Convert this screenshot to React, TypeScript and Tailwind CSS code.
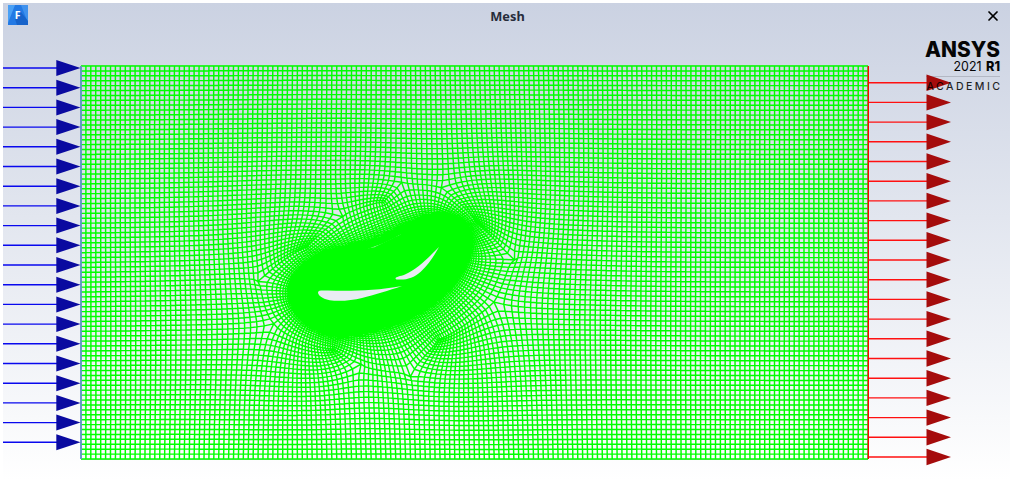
import React, { useMemo } from "react";
import { X } from "lucide-react";

type Pt = [number, number];

const COLS = 160;
const ROWS = 80;
const LEFT = 81;
const RIGHT = 868;
const TOP = 66;
const BOTTOM = 459;
const LAYERS = 18;

// Stepped outline of the O-grid block in grid indices, clockwise.
// Outer corners carry the position they are pinned to.
const OUTLINE: { at: Pt; pin?: Pt }[] = [
  { at: [36, 44], pin: [256, 283] },
  { at: [52, 44] },
  { at: [52, 31], pin: [345, 217] },
  { at: [65, 31] },
  { at: [65, 24], pin: [402, 181] },
  { at: [73, 24], pin: [440, 188] },
  { at: [73, 40] },
  { at: [88, 40], pin: [517, 262] },
  { at: [88, 50], pin: [493, 301] },
  { at: [68, 50] },
  { at: [68, 63], pin: [410, 379] },
  { at: [57, 63], pin: [363, 363] },
  { at: [57, 54] },
  { at: [36, 54], pin: [275, 323] },
];

// Outline of the fully dense core, clockwise
const CORE: Pt[] = [
  [288, 289], [292, 276], [306, 266], [335, 256], [355, 252], [375, 248], [400, 236], [416, 223],
  [431, 216], [448, 214], [461, 221], [469, 238], [466, 257],
  [454, 279], [430, 300], [405, 316], [382, 324],
  [355, 330], [330, 330], [309, 322], [293, 307],
];

const dist = (a: Pt, b: Pt) => Math.hypot(a[0] - b[0], a[1] - b[1]);

// Splits the core outline into many equal steps
function denseLoop(loop: Pt[]): Pt[] {
  const out: Pt[] = [];
  loop.forEach((p, k) => {
    const q = loop[(k + 1) % loop.length];
    const steps = Math.max(1, Math.round(dist(p, q) * 5));
    for (let s = 0; s < steps; s++) {
      out.push([p[0] + ((q[0] - p[0]) * s) / steps, p[1] + ((q[1] - p[1]) * s) / steps]);
    }
  });
  return out;
}

function buildMesh(): string {
  const grid: Pt[][] = [];
  for (let j = 0; j <= ROWS; j++) {
    const row: Pt[] = [];
    for (let i = 0; i <= COLS; i++) {
      row.push([LEFT + ((RIGHT - LEFT) * i) / COLS, TOP + ((BOTTOM - TOP) * j) / ROWS]);
    }
    grid.push(row);
  }

  const inHole = (ci: number, cj: number) => {
    const x = ci + 0.5;
    const y = cj + 0.5;
    let hit = false;
    OUTLINE.forEach(({ at: a }, k) => {
      const b = OUTLINE[(k + 1) % OUTLINE.length].at;
      if (a[0] === b[0] && a[0] > x && a[1] > y !== b[1] > y) hit = !hit;
    });
    return hit;
  };
  const hole: boolean[][] = [];
  for (let j = -1; j <= ROWS; j++) {
    const row: boolean[] = [];
    for (let i = -1; i <= COLS; i++) row.push(inHole(i, j));
    hole.push(row);
  }
  const cell = (i: number, j: number) => hole[j + 1][i + 1];
  const buried = (i: number, j: number) =>
    cell(i, j) && cell(i - 1, j) && cell(i, j - 1) && cell(i - 1, j - 1);
  const hEdge = (i: number, j: number) => !(cell(i, j) && cell(i, j - 1));
  const vEdge = (i: number, j: number) => !(cell(i, j) && cell(i - 1, j));

  const border: { i: number; j: number; hold: number }[] = [];
  const anchors: { k: number; pin: Pt }[] = [];
  OUTLINE.forEach(({ at, pin }, s) => {
    const to = OUTLINE[(s + 1) % OUTLINE.length].at;
    const len = Math.abs(to[0] - at[0]) + Math.abs(to[1] - at[1]);
    const di = Math.sign(to[0] - at[0]);
    const dj = Math.sign(to[1] - at[1]);
    if (pin) anchors.push({ k: border.length, pin });
    for (let t = 0; t < len; t++) {
      const hold = t === 0 ? (pin ? 0.6 : 0.01) : 0.05;
      border.push({ i: at[0] + di * t, j: at[1] + dj * t, hold });
    }
  });
  const n = border.length;

  const loop = denseLoop(CORE);
  const m = loop.length;
  const nearest = anchors.map(({ pin }) => {
    let best = 0;
    loop.forEach((p, q) => {
      if (dist(p, pin) < dist(loop[best], pin)) best = q;
    });
    return best;
  });
  const core: Pt[] = new Array(n);
  const rest: Pt[] = new Array(n);
  anchors.forEach((a, s) => {
    const b = anchors[(s + 1) % anchors.length];
    const steps = (b.k - a.k + n) % n;
    const span = (nearest[(s + 1) % anchors.length] - nearest[s] + m) % m;
    for (let t = 0; t < steps; t++) {
      const k = (a.k + t) % n;
      const u = t / steps;
      core[k] = loop[(nearest[s] + Math.round(span * u)) % m];
      const bow = 0.3 * u * (1 - u);
      const dx = b.pin[0] - a.pin[0];
      const dy = b.pin[1] - a.pin[1];
      rest[k] = [a.pin[0] + dx * u + dy * bow, a.pin[1] + dy * u - dx * bow];
      const p = grid[border[k].j][border[k].i];
      p[0] = rest[k][0];
      p[1] = rest[k][1];
    }
  });
  // Even out the spacing along the core
  for (let pass = 0; pass < 60; pass++) {
    const prev = core.map((p) => [p[0], p[1]] as Pt);
    for (let k = 0; k < n; k++) {
      const a = prev[(k + n - 1) % n];
      const b = prev[(k + 1) % n];
      core[k] = [(a[0] + b[0] + 2 * prev[k][0]) / 4, (a[1] + b[1] + 2 * prev[k][1]) / 4];
    }
  }

  const rings: Pt[][] = [];
  for (let r = 0; r <= LAYERS; r++) {
    rings.push(
      border.map(({ i, j }, k) => {
        const p = grid[j][i];
        if (r === 0) return p;
        return [p[0] + ((core[k][0] - p[0]) * r) / LAYERS, p[1] + ((core[k][1] - p[1]) * r) / LAYERS];
      })
    );
  }

  const onBorder = new Set(border.map(({ i, j }) => j * 1000 + i));
  for (let pass = 0; pass < 240; pass++) {
    for (let j = 1; j < ROWS; j++) {
      for (let i = 1; i < COLS; i++) {
        if (buried(i, j) || onBorder.has(j * 1000 + i)) continue;
        const p = grid[j][i];
        for (let a = 0; a < 2; a++) {
          const mean = (grid[j - 1][i][a] + grid[j + 1][i][a] + grid[j][i - 1][a] + grid[j][i + 1][a]) / 4;
          p[a] += (mean - p[a]) * 1.4;
        }
      }
    }
    for (let k = 0; k < n; k++) {
      const { i, j, hold } = border[k];
      const around: Pt[] = [rings[1][k]];
      if (hEdge(i, j)) around.push(grid[j][i + 1]);
      if (hEdge(i - 1, j)) around.push(grid[j][i - 1]);
      if (vEdge(i, j)) around.push(grid[j + 1][i]);
      if (vEdge(i, j - 1)) around.push(grid[j - 1][i]);
      const p = grid[j][i];
      for (let a = 0; a < 2; a++) {
        const mean = around.reduce((sum, q) => sum + q[a], 0) / around.length;
        p[a] = mean + (rest[k][a] - mean) * hold;
      }
    }
    for (let r = 1; r < LAYERS; r++) {
      for (let k = 0; k < n; k++) {
        const p = rings[r][k];
        const prev = rings[r][(k + n - 1) % n];
        const next = rings[r][(k + 1) % n];
        for (let a = 0; a < 2; a++) {
          p[a] = (rings[r - 1][k][a] * 0.95 + rings[r + 1][k][a] * 1.05 + prev[a] + next[a]) / 4;
        }
      }
    }
  }

  const f = (p: Pt) => p[0].toFixed(1) + " " + p[1].toFixed(1);
  let d = "";
  for (let j = 0; j <= ROWS; j++) {
    let pen = false;
    for (let i = 0; i < COLS; i++) {
      if (!hEdge(i, j)) {
        pen = false;
        continue;
      }
      d += (pen ? "" : "M" + f(grid[j][i])) + "L" + f(grid[j][i + 1]);
      pen = true;
    }
  }
  for (let i = 0; i <= COLS; i++) {
    let pen = false;
    for (let j = 0; j < ROWS; j++) {
      if (!vEdge(i, j)) {
        pen = false;
        continue;
      }
      d += (pen ? "" : "M" + f(grid[j][i])) + "L" + f(grid[j + 1][i]);
      pen = true;
    }
  }
  for (let r = 1; r <= LAYERS; r++) {
    d += "M" + rings[r].map(f).join("L") + "Z";
  }
  for (let k = 0; k < n; k++) {
    d += "M" + rings.map((ring) => f(ring[k])).join("L");
  }
  return d;
}

const corePath = "M" + CORE.map((p) => p.join(" ")).join("L") + "Z";
const arrows = Array.from({ length: 20 }, (_, k) => k * 19.7);

function Viewport() {
  const mesh = useMemo(buildMesh, []);
  return (
    <svg className="block h-[452px] w-[1007px]" viewBox="3 29 1007 452" fontFamily="Inter, 'Liberation Sans', sans-serif">
      <g fill="#050505">
        <text x="925" y="57" fontSize="21.5" fontWeight="800" textLength="75" lengthAdjust="spacingAndGlyphs">ANSYS</text>
        <text x="953.5" y="71" fontSize="13.5" textLength="28" lengthAdjust="spacingAndGlyphs">2021</text>
        <text x="986" y="71" fontSize="13.5" fontWeight="800" textLength="14" lengthAdjust="spacingAndGlyphs">R1</text>
      </g>
      <path d="M926 76.5H1000" stroke="#b3b8c4" />
      <path d="M81 65.5H868M81 459.5H868" stroke="#b9bcc0" />
      <path d={mesh} fill="none" stroke="#00ff00" strokeWidth="1.45" />
      <path d={corePath} fill="#00ff00" stroke="#00ff00" strokeWidth="2" strokeLinejoin="round" />
      <path
        d="M318 292.5C318 290 322 290.5 328 290.5C348 291.3 375 291 402 286C389 290.5 374 295 362 298C348 301.5 330 302 323 298C320 296.5 318 294.5 318 292.5Z"
        fill="#e9ecf3"
      />
      <path
        d="M395.5 278.5C396 276.5 400 276.5 405 274.5C417 269.5 428 258 439 247C434 256 429 264 421 271.5C414 278 406 280 399 279.5C397 279.5 395.5 279.5 395.5 278.5Z"
        fill="#e9ecf3"
      />
      <path d="M81 66V459" stroke="#7777ff" strokeWidth="1.4" />
      <path d="M868.3 66V459" stroke="#ff0000" strokeWidth="1.4" />
      {arrows.map((dy) => (
        <g key={dy}>
          <path d={`M3 ${68 + dy}H57`} stroke="#0808ee" strokeWidth="1.4" />
          <path d={`M56.3 ${60 + dy}L80.5 ${68 + dy}L56.3 ${76 + dy}Z`} fill="#0a0aa0" />
          <path d={`M869 ${82.7 + dy}H927`} stroke="#ff1010" strokeWidth="1.4" />
          <path d={`M926.5 ${74.5 + dy}L951 ${82.7 + dy}L926.5 ${90.9 + dy}Z`} fill="#a50c0c" />
        </g>
      ))}
      <text x="926.5" y="90" fontSize="10.6" fontWeight="500" fill="#000" fillOpacity="0.85" textLength="73.5" lengthAdjust="spacing">ACADEMIC</text>
    </svg>
  );
}

function AppIcon() {
  return (
    <svg className="h-5 w-5" viewBox="0 0 20 20">
      <path d="M0 0H20V20H0Z" fill="#2379e4" />
      <path d="M0 0H7L0 18Z" fill="#4aa0f5" />
      <path d="M13 0H20V18Z" fill="#3f91ed" />
      <path d="M13 7L20 16V20H9L7 14Z" fill="#1763ca" />
      <text x="6.8" y="14" fontSize="10.5" fontWeight="700" fill="#fff" fontFamily="'Open Sans', sans-serif">F</text>
    </svg>
  );
}

export default function App() {
  return (
    <div className="h-[481px] w-[1012px] overflow-hidden bg-white pl-[3px] pr-[2px] pt-[3px]">
      <div className="flex h-[478px] flex-col bg-linear-to-b from-[#cbd2e2] to-white">
        <header className="grid h-[26px] shrink-0 grid-cols-3 items-center pl-[5px] pr-[9px]">
          <div className="-mt-0.5 flex">
            <AppIcon />
          </div>
          <h1 className="pl-1.5 text-center font-['Noto_Sans',sans-serif] text-[12.8px] font-bold leading-5 text-[#272c3b]">
            Mesh
          </h1>
          <button className="flex justify-end" aria-label="Close">
            <X className="h-4 w-4 text-black" strokeWidth={2.6} />
          </button>
        </header>
        <Viewport />
      </div>
    </div>
  );
}
